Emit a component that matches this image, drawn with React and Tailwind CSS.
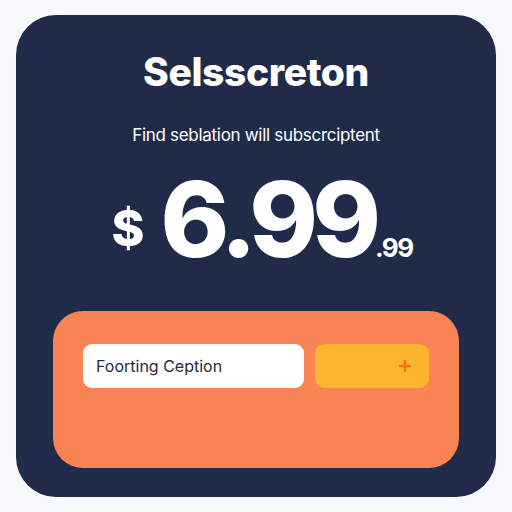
export default function App() {
  return (
    <div className="w-[512px] h-[512px] bg-[#f7f8fa] pt-[15px] px-[16px] font-['Inter',sans-serif]">
      <div className="h-[482px] rounded-[40px] bg-[#1f2b48] flex flex-col items-center pt-[34px]">
        <h1 className="text-[39px] leading-[46px] font-extrabold text-white tracking-[-0.4px]">Selsscreton</h1>
        <p className="mt-[28px] text-[17px] leading-[24px] text-white tracking-[-0.3px]">Find seblation will subscrciptent</p>
        <div className="mt-[20px] flex items-end text-white font-extrabold pl-[12px]">
          <span className="text-[50px] leading-none mb-[32px] mr-[16px]">$</span>
          <span className="text-[104px] leading-none tracking-[-6px] mb-[14px]">6.99</span>
          <span className="text-[26px] leading-none mb-[24px] font-bold tracking-[-1.5px]">.99</span>
        </div>
        <div className="mt-[26px] w-[406px] h-[157px] rounded-[30px] bg-[#f98352] flex gap-[11px] pt-[33px] px-[30px]">
          <div className="w-[221px] h-[44px] rounded-[9px] bg-white flex items-center px-[13px] text-[16px] text-[#1f2937]">Foorting Ception</div>
          <button className="w-[114px] h-[44px] rounded-[9px] bg-[#fdb52f] flex items-center justify-end pr-[18px] text-[#f0741c]">
            <svg width="12" height="12" viewBox="0 0 12 12"><path d="M6 1v10M1 6h10" stroke="currentColor" strokeWidth="2.6" strokeLinecap="round" /></svg>
          </button>
        </div>
      </div>
    </div>
  );
}
